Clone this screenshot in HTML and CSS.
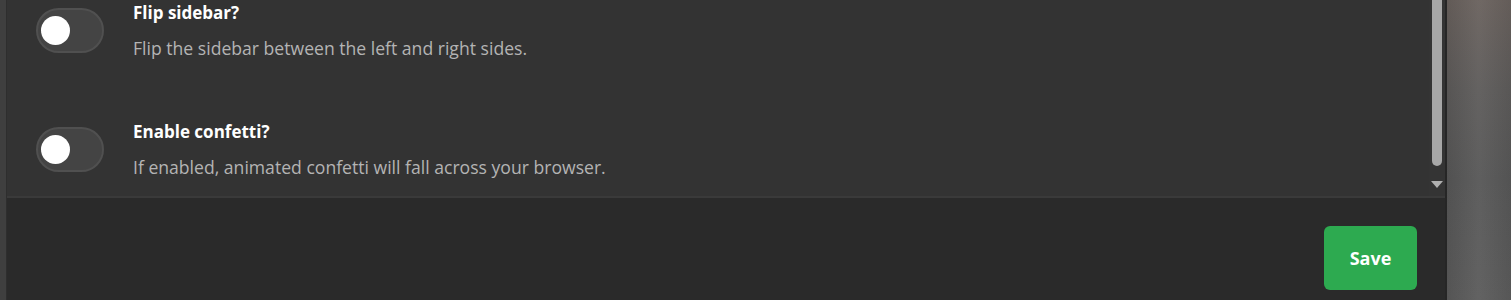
FILE: index.html
```html
<!DOCTYPE html>
<html>
<head>
<meta charset="utf-8">
<link rel="stylesheet" href="styles.css">
</head>
<body>
<div class="screen">
  <div class="edge"></div>
  <div class="modal">
    <div class="body">
      <div class="settings">
        <div class="row">
          <div class="toggle"><div class="knob"></div></div>
          <div class="text">
            <div class="title">Flip sidebar?</div>
            <div class="desc">Flip the sidebar between the left and right sides.</div>
          </div>
        </div>
        <div class="row">
          <div class="toggle"><div class="knob"></div></div>
          <div class="text">
            <div class="title">Enable confetti?</div>
            <div class="desc">If enabled, animated confetti will fall across your browser.</div>
          </div>
        </div>
      </div>
      <div class="scrollbar">
        <div class="thumb"></div>
        <div class="arrow"></div>
      </div>
    </div>
    <div class="footer">
      <button class="save">Save</button>
    </div>
  </div>
  <div class="backdrop"></div>
</div>
</body>
</html>
```
FILE: styles.css
```css
html, body {
  margin: 0;
  padding: 0;
  height: 300px;
  overflow: hidden;
  background: #2b2b2b;
  font-family: "Open Sans", "Noto Sans", sans-serif;
}
.screen {
  display: flex;
  height: 300px;
}
.edge {
  width: 7px;
  background: #3f3f3f;
  border-right: 1px solid #2e2e2e;
  box-sizing: border-box;
}
.modal {
  width: 1438px;
  display: flex;
  flex-direction: column;
  background: #2a2a2a;
}
.body {
  height: 196px;
  flex-shrink: 0;
  background: #333333;
  border-bottom: 2px solid #3a3a3a;
  display: flex;
}
.settings {
  flex: 1;
  padding-left: 29px;
  display: flex;
  flex-direction: column;
  overflow: hidden;
}
.row {
  display: flex;
  flex-shrink: 0;
  height: 119px;
  gap: 29px;
}
.toggle {
  margin-top: 8px;
  width: 68px;
  height: 45px;
  box-sizing: border-box;
  border: 2px solid #505050;
  background: #444444;
  border-radius: 23px;
  display: flex;
  align-items: center;
  padding-left: 3px;
}
.knob {
  width: 29px;
  height: 29px;
  border-radius: 50%;
  background: #ffffff;
}
.text {
  display: flex;
  flex-direction: column;
}
.title {
  color: #ffffff;
  font-weight: 700;
  font-size: 17px;
  line-height: 22px;
  margin-top: 2px;
}
.desc {
  color: #b4b4b4;
  font-size: 17.6px;
  line-height: 24px;
  margin-top: 12px;
}
.scrollbar {
  width: 16px;
  display: flex;
  flex-direction: column;
  align-items: center;
  background: #343434;
}
.thumb {
  width: 10px;
  height: 166px;
  background: #a7a7a7;
  border-radius: 0 0 5px 5px;
}
.arrow {
  margin-top: 15px;
  width: 0;
  height: 0;
  border-left: 6px solid transparent;
  border-right: 6px solid transparent;
  border-top: 7px solid #b0b0b0;
}
.footer {
  flex: 1;
  display: flex;
  justify-content: flex-end;
  align-items: flex-start;
  padding: 28px 28px 0 0;
}
.save {
  width: 93px;
  height: 64px;
  border: none;
  border-radius: 6px;
  background: #2daa50;
  color: #ffffff;
  font-family: "Open Sans", "Noto Sans", sans-serif;
  font-weight: 700;
  font-size: 18px;
}
.backdrop {
  flex: 1;
  border-left: 2px solid #262626;
  background: linear-gradient(90deg, rgba(0,0,0,0.08) 0%, rgba(255,255,255,0.04) 50%, rgba(0,0,0,0.06) 100%),
              linear-gradient(180deg, #6a625e 0%, #5e5c5b 30%, #585858 60%, #5c5c5c 100%);
}
```
